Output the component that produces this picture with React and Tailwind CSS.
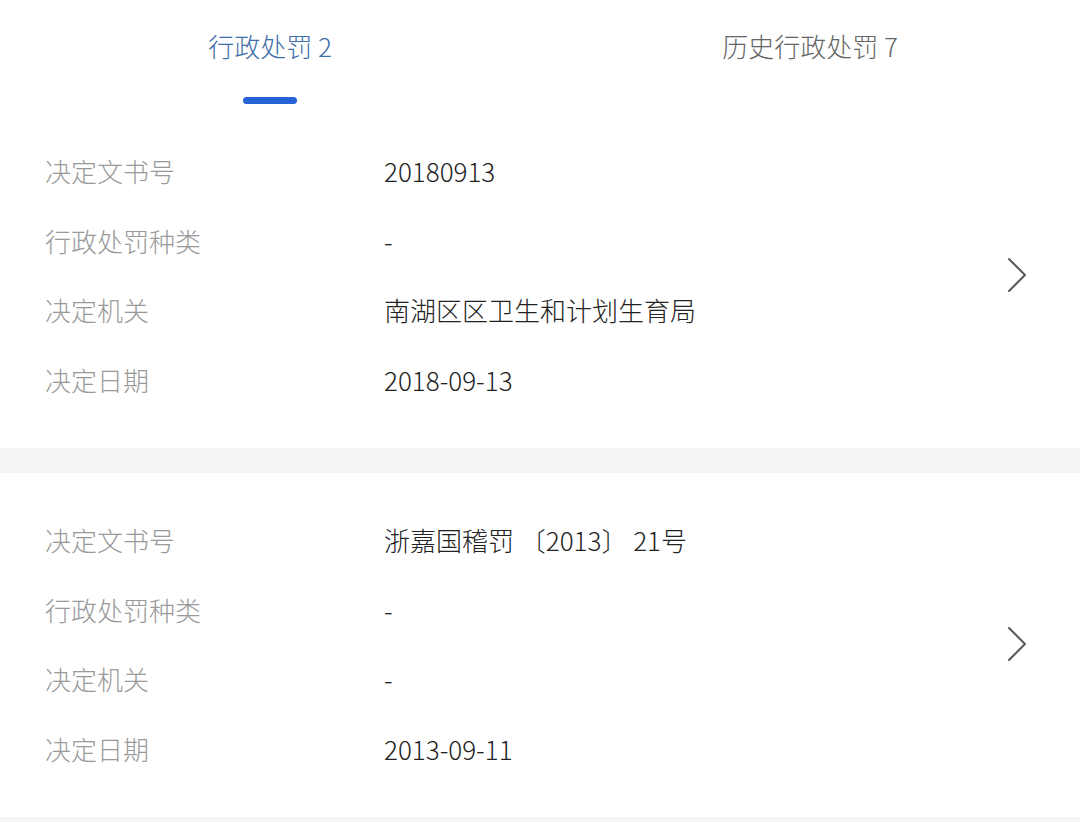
const records = [
  [
    ["决定文书号", "20180913"],
    ["行政处罚种类", "-"],
    ["决定机关", "南湖区区卫生和计划生育局"],
    ["决定日期", "2018-09-13"],
  ],
  [
    ["决定文书号", "浙嘉国稽罚 〔2013〕 21号"],
    ["行政处罚种类", "-"],
    ["决定机关", "-"],
    ["决定日期", "2013-09-11"],
  ],
];

function Chevron() {
  return (
    <svg width="22" height="36" viewBox="0 0 22 36" fill="none">
      <path d="M3 2 L19 18 L3 34" stroke="#5a5a5a" strokeWidth="2" strokeLinecap="round" strokeLinejoin="round" />
    </svg>
  );
}

export default function App() {
  return (
    <div
      className="w-[1080px] h-[822px] overflow-hidden bg-[#f5f5f5] font-light"
      style={{ fontFamily: '"Noto Sans CJK SC", "Noto Sans", sans-serif' }}
    >
      {/* Tabs */}
      <div className="flex h-[104px] bg-white">
        <div className="flex flex-1 flex-col items-center">
          <div className="mt-[27px] text-[26px] leading-[38px] text-[#3d6ea8]">行政处罚&nbsp;2</div>
          <div className="mt-[32px] h-[7px] w-[54px] rounded-full bg-[#2563d6]"></div>
        </div>
        <div className="flex flex-1 flex-col items-center">
          <div className="mt-[27px] text-[26px] leading-[38px] text-[#666666]">历史行政处罚&nbsp;7</div>
        </div>
      </div>

      {records.map((rows, i) => (
        <div key={i} className={`flex items-center bg-white pl-[45px] pr-[52px] pt-[32px] pb-[34px] ${i > 0 ? "mt-[25px]" : ""}`}>
          <div className="flex-1">
            {rows.map(([label, value]) => (
              <div key={label} className="flex h-[69.5px] items-center text-[26px]">
                <span className="w-[339px] text-[#999999]">{label}</span>
                <span className="text-[#222222]">{value}</span>
              </div>
            ))}
          </div>
          <Chevron />
        </div>
      ))}
    </div>
  );
}
